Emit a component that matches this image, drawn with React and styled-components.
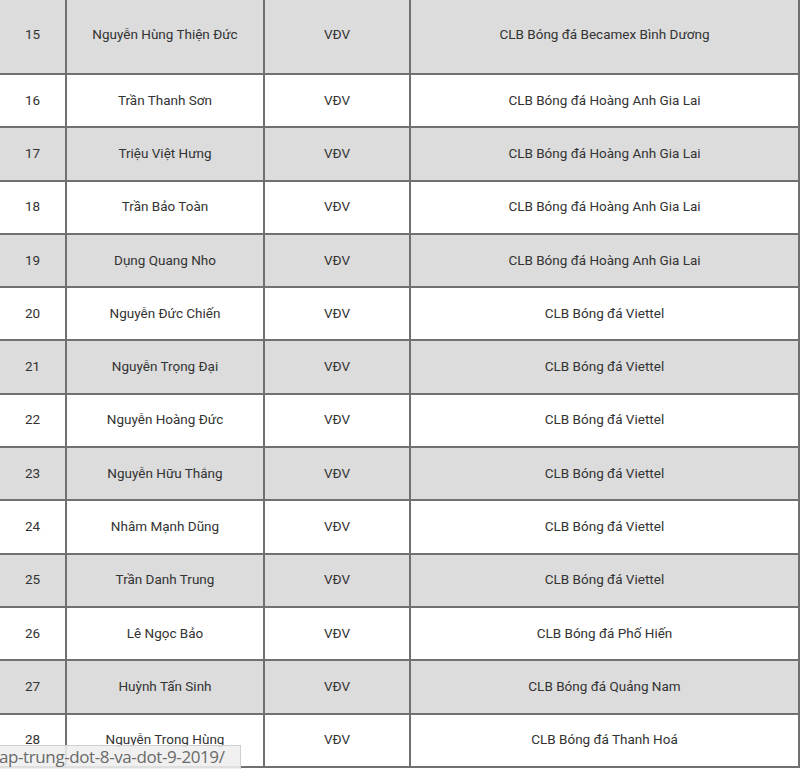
import React from 'react';
import styled, { createGlobalStyle } from 'styled-components';

const GlobalStyle = createGlobalStyle`
  html, body {
    margin: 0;
    padding: 0;
    background: #ffffff;
    overflow: hidden;
  }
  body {
    font-family: Roboto, "Noto Sans", "DejaVu Sans", sans-serif;
  }
`;

const Page = styled.div`
  width: 800px;
  height: 769px;
  overflow: hidden;
  position: relative;
`;

const Table = styled.div`
  margin-top: -3px;
  width: 798px;
  border-right: 2px solid #707070;
`;

const Row = styled.div`
  display: grid;
  grid-template-columns: 67px 198px 146px 1fr;
  height: ${(p) => (p.$first ? '78px' : '53.3px')};
  background: ${(p) => (p.$shaded ? '#dcdcdc' : '#ffffff')};
  border-bottom: 2px solid #707070;
  box-sizing: border-box;
`;

const Cell = styled.div`
  display: flex;
  align-items: center;
  justify-content: center;
  padding-bottom: 2px;
  font-size: 13.5px;
  color: #333333;
  border-right: ${(p) => (p.$last ? 'none' : '2px solid #707070')};
  white-space: nowrap;
`;

const StatusBar = styled.div`
  position: absolute;
  left: 0;
  bottom: 0;
  height: 23px;
  width: 240px;
  background: rgba(238, 238, 238, 0.88);
  border-top: 1px solid #cfcfcf;
  border-right: 1px solid #cfcfcf;
  overflow: hidden;
  display: flex;
  align-items: center;
`;

const StatusText = styled.span`
  font-family: "Open Sans", "DejaVu Sans", sans-serif;
  font-size: 17px;
  letter-spacing: -0.4px;
  color: #6a6a6a;
  white-space: nowrap;
  margin-left: -1px;
  padding-bottom: 2px;
`;

const rows = [
  [15, 'Nguyễn Hùng Thiện Đức', 'CLB Bóng đá Becamex Bình Dương'],
  [16, 'Trần Thanh Sơn', 'CLB Bóng đá Hoàng Anh Gia Lai'],
  [17, 'Triệu Việt Hưng', 'CLB Bóng đá Hoàng Anh Gia Lai'],
  [18, 'Trần Bảo Toàn', 'CLB Bóng đá Hoàng Anh Gia Lai'],
  [19, 'Dụng Quang Nho', 'CLB Bóng đá Hoàng Anh Gia Lai'],
  [20, 'Nguyễn Đức Chiến', 'CLB Bóng đá Viettel'],
  [21, 'Nguyễn Trọng Đại', 'CLB Bóng đá Viettel'],
  [22, 'Nguyễn Hoàng Đức', 'CLB Bóng đá Viettel'],
  [23, 'Nguyễn Hữu Thắng', 'CLB Bóng đá Viettel'],
  [24, 'Nhâm Mạnh Dũng', 'CLB Bóng đá Viettel'],
  [25, 'Trần Danh Trung', 'CLB Bóng đá Viettel'],
  [26, 'Lê Ngọc Bảo', 'CLB Bóng đá Phố Hiến'],
  [27, 'Huỳnh Tấn Sinh', 'CLB Bóng đá Quảng Nam'],
  [28, 'Nguyễn Trọng Hùng', 'CLB Bóng đá Thanh Hoá'],
];

export default function App() {
  return (
    <Page>
      <GlobalStyle />
      <Table>
        {rows.map(([no, name, club], i) => (
          <Row key={no} $first={i === 0} $shaded={i % 2 === 0}>
            <Cell>{no}</Cell>
            <Cell>{name}</Cell>
            <Cell>VĐV</Cell>
            <Cell $last>{club}</Cell>
          </Row>
        ))}
      </Table>
      <StatusBar>
        <StatusText>ap-trung-dot-8-va-dot-9-2019/</StatusText>
      </StatusBar>
    </Page>
  );
}
